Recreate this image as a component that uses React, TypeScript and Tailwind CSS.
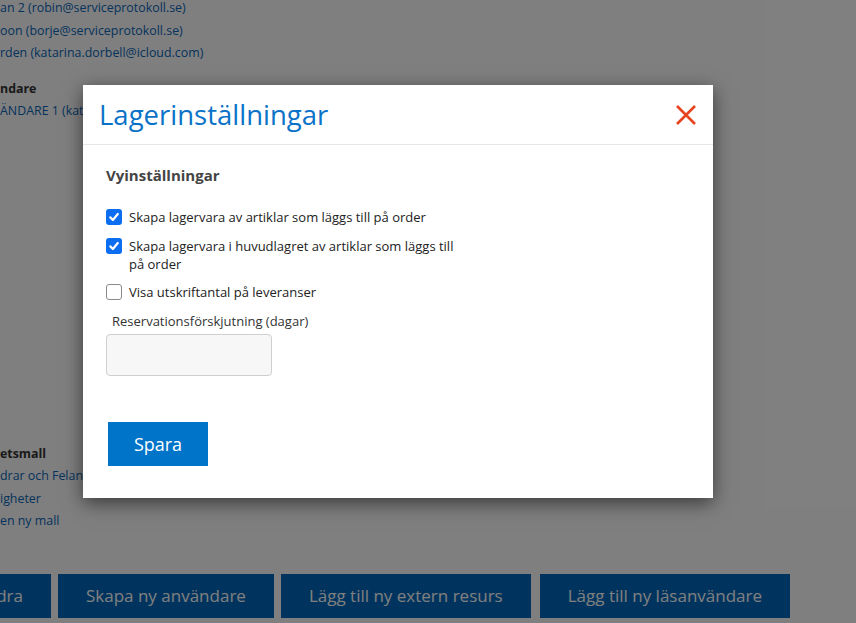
import React from "react";

function Check({ checked }: { checked: boolean }) {
  if (checked) {
    return (
      <span className="mt-[1px] flex h-4 w-4 shrink-0 items-center justify-center rounded-[3px] bg-[#0b6ef0]">
        <svg width="12" height="12" viewBox="0 0 12 12" fill="none">
          <path d="M2.3 6.4 L4.9 9 L9.8 3" stroke="#fff" strokeWidth="2.2" strokeLinecap="round" strokeLinejoin="round" />
        </svg>
      </span>
    );
  }
  return <span className="mt-[1px] h-4 w-4 shrink-0 rounded-[3px] border border-[#8a8a8a] bg-white" />;
}

export default function App() {
  const font = { fontFamily: '"Open Sans", "Noto Sans", sans-serif' };
  return (
    <div className="relative h-[623px] w-[856px] overflow-hidden bg-white" style={font}>
      {/* background page */}
      <div className="flex flex-col text-[12.4px]">
        <div className="mt-[-3px] flex flex-col leading-[22.5px] text-[#0a66b8]">
          <span className="whitespace-nowrap">an 2 (robin@serviceprotokoll.se)</span>
          <span className="whitespace-nowrap">oon (borje@serviceprotokoll.se)</span>
          <span className="whitespace-nowrap">rden (katarina.dorbell@icloud.com)</span>
        </div>
        <div className="mt-[13px] flex flex-col leading-[22.5px]">
          <span className="font-bold text-[#333]">ndare</span>
          <span className="whitespace-nowrap text-[#0a66b8]">ÄNDARE 1 (kata</span>
        </div>
        <div className="mt-[320px] flex flex-col leading-[22.5px]">
          <span className="font-bold text-[#333]">etsmall</span>
          <span className="whitespace-nowrap text-[#0a66b8]">drar och Felan</span>
          <span className="whitespace-nowrap text-[#0a66b8]">igheter</span>
          <span className="whitespace-nowrap text-[#0a66b8]">en ny mall</span>
        </div>
        <div className="mt-[41px] flex gap-[7px] text-[17px] text-white">
          <div className="ml-[-53px] flex h-[44px] items-center bg-[#0068bc] px-[28px]">Ändra</div>
          <div className="flex h-[44px] items-center bg-[#0068bc] px-[28px] whitespace-nowrap">Skapa ny användare</div>
          <div className="flex h-[44px] items-center bg-[#0068bc] px-[28px] whitespace-nowrap">Lägg till ny extern resurs</div>
          <div className="ml-[2px] flex h-[44px] items-center bg-[#0068bc] px-[28px] whitespace-nowrap">Lägg till ny läsanvändare</div>
        </div>
      </div>

      {/* overlay */}
      <div className="absolute inset-0 bg-black/50" />

      {/* modal */}
      <div className="absolute left-[83px] top-[85px] flex h-[413px] w-[630px] flex-col bg-white shadow-[0_5px_18px_rgba(0,0,0,0.55)]">
        <div className="flex h-[60px] items-center justify-between border-b border-[#e6e6e6] pl-[16px] pr-[16px]">
          <span className="text-[27.5px] leading-none text-[#0a72c8]">Lagerinställningar</span>
          <svg width="22" height="22" viewBox="0 0 22 22" className="mt-[1px]">
            <path d="M2 2 L20 20 M20 2 L2 20" stroke="#e8431f" strokeWidth="2.6" />
          </svg>
        </div>
        <div className="flex flex-col pl-[23px] pt-[20px]">
          <span className="text-[15px] font-bold leading-[20px] text-[#444]">Vyinställningar</span>
          <label className="mt-[23px] flex gap-[7px] text-[13px] leading-[18px] text-[#222]">
            <Check checked />
            <span>Skapa lagervara av artiklar som läggs till på order</span>
          </label>
          <label className="mt-[11px] flex w-[362px] gap-[7px] text-[13px] leading-[18px] text-[#222]">
            <Check checked />
            <span>Skapa lagervara i huvudlagret av artiklar som läggs till på order</span>
          </label>
          <label className="mt-[10px] flex gap-[7px] text-[13px] leading-[18px] text-[#222]">
            <Check checked={false} />
            <span>Visa utskriftantal på leveranser</span>
          </label>
          <span className="ml-[6px] mt-[11px] text-[13px] leading-[18px] text-[#333]">Reservationsförskjutning (dagar)</span>
          <div className="mt-[4px] h-[42px] w-[166px] rounded-[4px] border border-[#cfcfcf] bg-[#f7f7f7]" />
          <button className="ml-[2px] mt-[46px] flex h-[44px] w-[100px] items-center justify-center bg-[#0074c8] text-[18px] text-white">
            Spara
          </button>
        </div>
      </div>
    </div>
  );
}
